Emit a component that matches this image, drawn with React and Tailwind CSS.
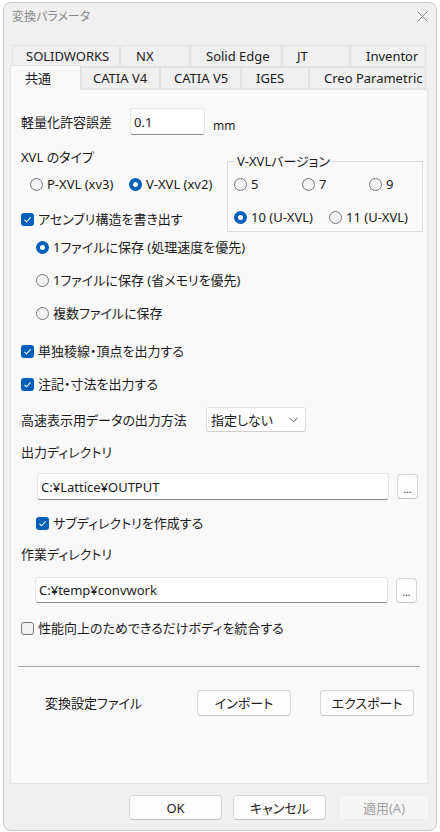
import React from 'react';

const Radio = ({ checked, label, className = '' }) => (
    <div className={`flex items-center h-[20px] ${className}`}>
        {checked ? (
            <span className="w-[13px] h-[13px] rounded-full bg-[#005fb8] flex items-center justify-center shrink-0">
                <span className="w-[5px] h-[5px] rounded-full bg-white"></span>
            </span>
        ) : (
            <span className="w-[13px] h-[13px] rounded-full border border-[#777777] bg-[#f3f3f3] shrink-0"></span>
        )}
        <span className="ml-[4px] whitespace-nowrap">{label}</span>
    </div>
);

const Check = ({ checked, label, className = '' }) => (
    <div className={`flex items-center h-[20px] ${className}`}>
        {checked ? (
            <span className="w-[13px] h-[13px] rounded-[3px] bg-[#005fb8] flex items-center justify-center shrink-0">
                <svg width="9" height="9" viewBox="0 0 9 9">
                    <path d="M1.5 4.8 L3.6 6.8 L7.6 2.4" fill="none" stroke="white" strokeWidth="1.1" />
                </svg>
            </span>
        ) : (
            <span className="w-[13px] h-[13px] rounded-[3px] border border-[#777777] bg-[#f3f3f3] shrink-0"></span>
        )}
        <span className="ml-[4px] whitespace-nowrap">{label}</span>
    </div>
);

const Btn = ({ children, className = '', disabled }) => (
    <div
        className={`h-[25px] flex items-center justify-center rounded-[4px] border ${
            disabled
                ? 'bg-[#f5f5f5] border-[#ececec] text-[#a0a0a0]'
                : 'bg-[#fdfdfd] border-[#d6d6d6] border-b-[#c4c4c4] text-[#1b1b1b]'
        } ${className}`}
    >
        {children}
    </div>
);

const TextBox = ({ value, className = '' }) => (
    <div className={`bg-white border border-[#e6e6e6] border-b-[#8a8a8a] rounded-[3px] flex items-center pl-[3px] ${className}`}>
        {value}
    </div>
);

const Tab = ({ label, w, pl, selected }) => (
    <div
        className={`flex items-center shrink-0 border border-[#e3e3e3] ${
            selected ? 'h-[25px] bg-[#f9f9f9] border-b-0 relative z-10' : 'h-[22px] mb-[1px] bg-[#f0f0f0]'
        }`}
        style={{ width: w, paddingLeft: pl }}
    >
        {label}
    </div>
);

const App = () => {
    return (
        <div className="w-[440px] h-[832px] bg-white pt-[2px] pl-[3px] text-[13px] leading-[20px] text-[#1b1b1b] [font-feature-settings:'palt'] font-['Noto_Sans','Noto_Sans_CJK_JP',sans-serif]">
            <div className="w-[434px] h-[829px] rounded-[8px] border border-[#c9c9c9] bg-[#f0f0f0] flex flex-col overflow-hidden">
                {/* title bar */}
                <div className="h-[27px] flex items-center justify-between pl-[8px] pr-[8px] text-[12px] text-[#8a8a8a]">
                    <span>変換パラメータ</span>
                    <svg width="11" height="11" viewBox="0 0 11 11">
                        <path d="M0.5 0.5 L10.5 10.5 M10.5 0.5 L0.5 10.5" stroke="#8a8a8a" strokeWidth="1" />
                    </svg>
                </div>

                {/* tabs */}
                <div className="mt-[15px] ml-[8px] flex h-[22px]">
                    <Tab label="SOLIDWORKS" w={108} pl={13} />
                    <Tab label="NX" w={70} pl={15} />
                    <Tab label="Solid Edge" w={92} pl={15} />
                    <Tab label="JT" w={68} pl={14} />
                    <Tab label="Inventor" w={76} pl={15} />
                </div>
                <div className="-mt-[2px] ml-[6px] flex items-end h-[25px]">
                    <Tab label="共通" w={71} pl={14} selected />
                    <Tab label="CATIA V4" w={79} pl={11} />
                    <Tab label="CATIA V5" w={81} pl={13} />
                    <Tab label="IGES" w={68} pl={14} />
                    <Tab label="Creo Parametric" w={117} pl={14} />
                </div>

                {/* panel */}
                <div className="-mt-[1px] ml-[6px] w-[418px] h-[695px] border border-[#e3e3e3] bg-[#f9f9f9] pl-[10px] flex flex-col">
                    <div className="mt-[18px] flex items-center h-[27px]">
                        <span className="w-[109px]">軽量化許容誤差</span>
                        <TextBox value="0.1" className="w-[75px] h-[27px]" />
                        <span className="ml-[8px] pt-[9px] text-[12px]">mm</span>
                    </div>

                    <div className="mt-[12px] flex items-start">
                        <div className="w-[206px] flex flex-col">
                            <div className="h-[20px]">XVL のタイプ</div>
                            <div className="mt-[7px] flex pl-[9px]">
                                <Radio label="P-XVL (xv3)" className="w-[99px]" />
                                <Radio label="V-XVL (xv2)" checked />
                            </div>
                            <Check label="アセンブリ構造を書き出す" checked className="mt-[15px]" />
                        </div>
                        <fieldset className="mt-[6px] w-[196px] h-[79px] border border-[#dcdcdc]">
                            <legend className="ml-[8px] px-[1px] leading-[16px]">V-XVLバージョン</legend>
                            <div className="mt-[5px] flex pl-[6px]">
                                <Radio label="5" className="w-[68px]" />
                                <Radio label="7" className="w-[67px]" />
                                <Radio label="9" />
                            </div>
                            <div className="mt-[13px] flex pl-[6px]">
                                <Radio label="10 (U-XVL)" checked className="w-[95px]" />
                                <Radio label="11 (U-XVL)" />
                            </div>
                        </fieldset>
                    </div>

                    <div className="pl-[15px] flex flex-col">
                        <Radio label="1ファイルに保存 (処理速度を優先)" checked className="mt-[5px]" />
                        <Radio label="1ファイルに保存 (省メモリを優先)" className="mt-[13px]" />
                        <Radio label="複数ファイルに保存" className="mt-[13px]" />
                    </div>

                    <Check label="単独稜線・頂点を出力する" checked className="mt-[18px]" />
                    <Check label="注記・寸法を出力する" checked className="mt-[13px]" />

                    <div className="mt-[13px] flex items-center h-[25px]">
                        <span className="w-[185px]">高速表示用データの出力方法</span>
                        <div className="w-[100px] h-[25px] bg-white border border-[#e0e0e0] border-b-[#cfcfcf] rounded-[3px] flex items-center justify-between pl-[4px] pr-[7px]">
                            <span>指定しない</span>
                            <svg width="9" height="6" viewBox="0 0 9 6">
                                <path d="M0.5 0.8 L4.5 4.8 L8.5 0.8" fill="none" stroke="#555" strokeWidth="1" />
                            </svg>
                        </div>
                    </div>

                    <div className="mt-[10px] h-[20px]">出力ディレクトリ</div>
                    <div className="mt-[11px] pl-[16px] flex items-center h-[27px]">
                        <TextBox value="C:¥Lattice¥OUTPUT" className="w-[352px] h-[27px]" />
                        <Btn className="ml-[8px] w-[21px] text-[10px] leading-[10px] pt-[4px]">...</Btn>
                    </div>
                    <Check label="サブディレクトリを作成する" checked className="mt-[13px] ml-[15px]" />

                    <div className="mt-[11px] h-[20px]">作業ディレクトリ</div>
                    <div className="mt-[13px] pl-[14px] flex items-center h-[26px]">
                        <TextBox value="C:¥temp¥convwork" className="w-[353px] h-[26px]" />
                        <Btn className="ml-[8px] w-[21px] text-[10px] leading-[10px] pt-[4px]">...</Btn>
                    </div>
                    <Check label="性能向上のためできるだけボディを統合する" className="mt-[15px]" />

                    <div className="mt-[28px] -ml-[3px] w-[402px] border-t border-[#a8a8a8]"></div>

                    <div className="mt-[23px] pl-[24px] flex items-center h-[26px]">
                        <span className="w-[152px]">変換設定ファイル</span>
                        <Btn className="w-[94px] h-[26px]">インポート</Btn>
                        <Btn className="ml-[29px] w-[94px] h-[26px]">エクスポート</Btn>
                    </div>
                </div>

                {/* dialog buttons */}
                <div className="mt-[11px] flex pl-[125px]">
                    <Btn className="w-[93px]">OK</Btn>
                    <Btn className="ml-[11px] w-[93px]">キャンセル</Btn>
                    <Btn className="ml-[12px] w-[92px]" disabled>適用(A)</Btn>
                </div>
            </div>
        </div>
    );
};

export default App;
